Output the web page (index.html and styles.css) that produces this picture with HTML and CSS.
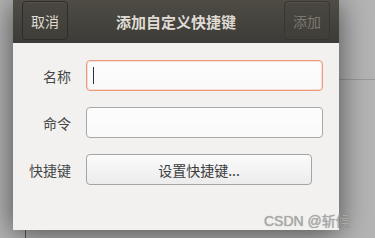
FILE: index.html
```html
<!DOCTYPE html>
<html lang="zh">
<head>
  <meta charset="UTF-8" />
  <title>添加自定义快捷键</title>
  <link rel="stylesheet" href="styles.css">
</head>
<body>
  <div class="desktop">
    <div class="behind"></div>

    <div class="dialog">
      <div class="header">
        <button class="head-btn">取消</button>
        <div class="title">添加自定义快捷键</div>
        <button class="head-btn disabled">添加</button>
      </div>

      <div class="form">
        <label class="label">名称</label>
        <div class="entry focus"><span class="caret"></span></div>

        <label class="label">命令</label>
        <div class="entry"></div>

        <label class="label">快捷键</label>
        <button class="shortcut-btn">设置快捷键...</button>
      </div>
    </div>

    <div class="watermark">CSDN @斩候</div>
  </div>
</body>
</html>
```

FILE: styles.css
```css
body {
  margin: 0;
  padding: 0;
  font-family: "Noto Sans CJK SC", "Noto Sans", sans-serif;
  background: #b4b4b4;
}

.desktop {
  position: relative;
  width: 375px;
  height: 238px;
  overflow: hidden;
  padding-left: 13px;
  box-sizing: border-box;
}

.behind {
  position: absolute;
  left: 25px;
  top: 79px;
  right: -10px;
  bottom: -10px;
  border-top: 1px solid #9a9a9a;
  border-left: 1px solid #5a5a5a;
}

.dialog {
  position: relative;
  width: 326px;
  height: 230px;
  background: #f2f1f0;
  box-shadow: 0 3px 28px rgba(0, 0, 0, 0.6);
}

.header {
  height: 43px;
  display: flex;
  align-items: flex-start;
  justify-content: space-between;
  padding: 1px 9px 0;
  box-sizing: border-box;
  background: linear-gradient(#4f4c45, #3c3b37);
}

.head-btn {
  width: 46px;
  height: 39px;
  padding: 0;
  font-family: inherit;
  font-size: 14px;
  color: #dfdbd2;
  background: linear-gradient(#4a4741, #403e39);
  border: 1px solid #2e2d29;
  border-radius: 4px;
  box-shadow: inset 0 1px 0 rgba(255, 255, 255, 0.06);
}

.head-btn.disabled {
  color: #7c7870;
  border-color: #38362f;
}

.title {
  line-height: 43px;
  margin-top: -1px;
  font-size: 15px;
  font-weight: bold;
  color: #dfdbd2;
}

.form {
  display: grid;
  grid-template-columns: 44px 1fr;
  column-gap: 15px;
  row-gap: 16px;
  align-items: center;
  padding: 17px 16px 0 14px;
}

.label {
  text-align: right;
  font-size: 14px;
  color: #474747;
}

.entry {
  height: 31px;
  box-sizing: border-box;
  border: 1px solid #a9a9a9;
  border-radius: 4px;
  background: linear-gradient(#fdfdfd, #f9f9f9);
  display: flex;
  align-items: center;
  padding-left: 6px;
}

.entry.focus {
  border-color: #ec9a7c;
  box-shadow: inset 0 0 0 1px rgba(240, 170, 140, 0.35);
}

.caret {
  width: 1px;
  height: 17px;
  background: #333;
}

.shortcut-btn {
  width: 226px;
  height: 31px;
  padding: 0;
  font-family: inherit;
  font-size: 14px;
  color: #3c3c3c;
  background: linear-gradient(#fbfbfb, #ececec);
  border: 1px solid #a5a5a5;
  border-radius: 4px;
}

.watermark {
  position: absolute;
  left: 264px;
  top: 210px;
  white-space: nowrap;
  font-family: "Liberation Sans", "Noto Sans CJK SC", sans-serif;
  font-size: 14px;
  color: #a8a8a8;
  text-shadow: 0 0 1px rgba(0, 0, 0, 0.35);
}
```
